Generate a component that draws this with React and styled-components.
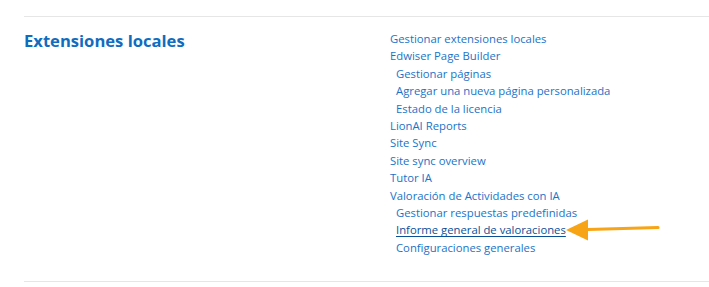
import React from "react";
import styled, { createGlobalStyle } from "styled-components";

const GlobalStyle = createGlobalStyle`
  body {
    margin: 0;
    background: #fff;
    font-family: "Open Sans", "Noto Sans", sans-serif;
  }
`;

const Page = styled.div`
  padding: 16px 0 0 24px;
  width: 709px;
  height: 287px;
  box-sizing: border-box;
`;

const Section = styled.section`
  display: grid;
  grid-template-columns: 366px 1fr;
  border-top: 1px solid #e6e6e6;
  border-bottom: 1px solid #e6e6e6;
  padding: 12px 0 26px;
`;

const Heading = styled.h2`
  margin: 0;
  font-size: 16.6px;
  font-weight: 700;
  color: #0f6cbf;
  line-height: 24px;
`;

const List = styled.ul`
  list-style: none;
  margin: 0;
  padding: 0;
`;

const Item = styled.li`
  position: relative;
  height: 17.4px;
  line-height: 17.4px;
  padding-left: ${(p) => (p.$sub ? "6px" : "0")};
`;

const Link = styled.a`
  font-size: 11.3px;
  color: ${(p) => (p.$active ? "#0b4f96" : "#1a73c8")};
  text-decoration: ${(p) => (p.$active ? "underline" : "none")};
  text-underline-offset: 2px;
  white-space: nowrap;
  cursor: pointer;
`;

const Arrow = styled.svg`
  position: absolute;
  left: 176px;
  top: -2px;
`;

const items = [
  { label: "Gestionar extensiones locales" },
  { label: "Edwiser Page Builder" },
  { label: "Gestionar páginas", sub: true },
  { label: "Agregar una nueva página personalizada", sub: true },
  { label: "Estado de la licencia", sub: true },
  { label: "LionAI Reports" },
  { label: "Site Sync" },
  { label: "Site sync overview" },
  { label: "Tutor IA" },
  { label: "Valoración de Actividades con IA" },
  { label: "Gestionar respuestas predefinidas", sub: true },
  { label: "Informe general de valoraciones", sub: true, active: true },
  { label: "Configuraciones generales", sub: true },
];

export default function App() {
  return (
    <>
      <GlobalStyle />
      <Page>
        <Section>
          <Heading>Extensiones locales</Heading>
          <List>
            {items.map((it) => (
              <Item key={it.label} $sub={it.sub}>
                <Link $active={it.active}>{it.label}</Link>
                {it.active && (
                  <Arrow width="96" height="24" viewBox="0 0 96 24">
                    <path d="M22 11.5 L92 9.5" stroke="#f7a516" strokeWidth="3.2" strokeLinecap="round" />
                    <polygon points="0,12 22,1.5 22,22.5" fill="#f7a516" />
                  </Arrow>
                )}
              </Item>
            ))}
          </List>
        </Section>
      </Page>
    </>
  );
}
